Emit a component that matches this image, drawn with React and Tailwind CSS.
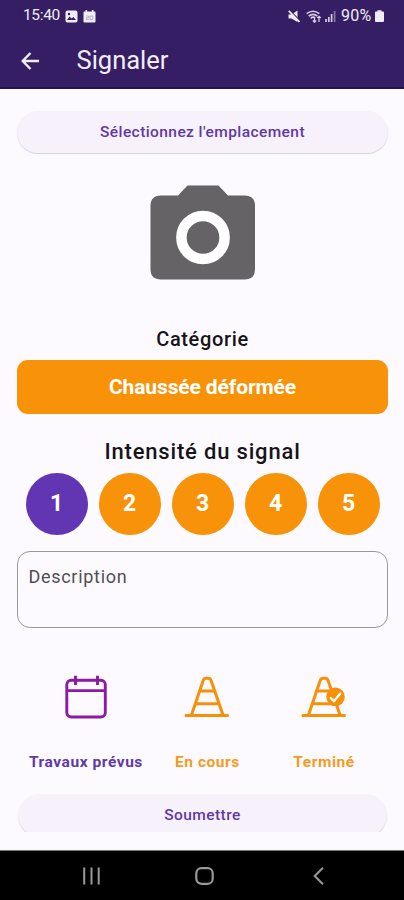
import React from "react";

const LEVELS = [1, 2, 3, 4, 5];

function StatusBar() {
  return (
    <div className="flex h-[32px] items-center pl-[23px] pr-[20px] text-[15.5px] text-[#f1edf8]">
      <span className="w-[38px] whitespace-nowrap tracking-[-0.35px]">15:40</span>
      <svg className="ml-[4px]" width="13" height="13" viewBox="0 0 13 13">
        <rect x="0.5" y="0.5" width="12" height="12" rx="2" fill="#f1edf8" />
        <path d="M2 10l2.5-3.5 2 2 2-1.500L11 10z" fill="#351e63" />
        <circle cx="4" cy="4" r="1.200" fill="#351e63" />
      </svg>
      <svg className="ml-[5px]" width="13" height="13" viewBox="0 0 13 13">
        <path d="M1.500 1.500h1V0h1.600v1.500h4.800V0h1.600v1.500h1q1 0 1 1V11.500q0 1-1 1h-10q-1 0-1-1v-9q0-1 1-1z" fill="#f1edf8" />
        <path d="M3.200 6h2.600v1.800H3.400V9.500h2.500M7.200 6h2.600v3.500H7.200z" fill="none" stroke="#aaa0c0" strokeWidth="0.8" />
      </svg>
      <svg className="ml-auto" width="12" height="13" viewBox="0 0 12 13">
        <path d="M0.500 4.500H3.500L9.500 0.500V12L3.500 8.500H0.500z" fill="#f1edf8" />
        <path d="M1.500 0L12 11" stroke="#351e63" strokeWidth="1.400" />
        <path d="M0.800 0.800L11.500 12" stroke="#f1edf8" strokeWidth="1.700" />
      </svg>
      <svg className="ml-[6px]" width="17" height="13" viewBox="0 0 17 13" fill="none" stroke="#d5cde2">
        <path d="M0.700 3.700Q7 -1.200 13.300 3.700M2.700 6.100Q7 2.500 11.300 6.100M4.700 8.300Q7 6.300 9 8" strokeWidth="1.700" />
        <path d="M8.500 12V7M6.800 10.500L8.500 12.200L10.200 10.500M13 12V6.500M11.300 8L13 6.300L14.700 8" strokeWidth="1.300" />
      </svg>
      <svg className="ml-[2px]" width="12" height="12" viewBox="0 0 12 12">
        <path d="M1 9v3M3.800 7v5M6.600 4v8" stroke="#d5cde2" strokeWidth="1.700" />
        <path d="M9.600 1v11" stroke="#8a7ba8" strokeWidth="1.700" />
      </svg>
      <span className="ml-[4px] w-[32px] whitespace-nowrap text-[16px] tracking-[0.300px]">90%</span>
      <svg className="ml-[2px]" width="9" height="12" viewBox="0 0 9 12">
        <path d="M2.500 0.300h4v1.200h1.500q1 0 1 1V11q0 1-1 1H1q-1 0-1-1V2.500q0-1 1-1h1.500z" fill="#f1edf8" />
      </svg>
    </div>
  );
}

function Header() {
  return (
    <header className="h-[89px] border-b-2 border-[#251052] bg-[#351e63]">
      <StatusBar />
      <div className="flex h-[57px] items-center pl-[21px]">
        <svg width="19" height="18" viewBox="0 0 19 18" fill="none" stroke="#f1edf8" strokeWidth="2.400">
          <path d="M18 9H2M9.500 1L1.700 9L9.500 17" />
        </svg>
        <h1 className="ml-[36.500px] text-[25.500px] leading-none tracking-[0px] text-[#f1edf8]">Signaler</h1>
      </div>
    </header>
  );
}

function Camera() {
  return (
    <svg className="mx-auto mt-[32px] block shrink-0" width="106" height="95" viewBox="0 0 106 95">
      <path d="M37.500 0.500H68.500L78 10.500H94.500Q105 10.500 105 21V84Q105 94.500 94.500 94.500H11Q0.500 94.500 0.500 84V21Q0.500 10.500 11 10.500H28Z" fill="#656366" />
      <circle cx="53" cy="52.500" r="21.600" fill="#656366" stroke="#fff" strokeWidth="10.500" />
    </svg>
  );
}

function CalendarIcon() {
  return (
    <svg width="46" height="46" viewBox="0 0 46 46" fill="none" stroke="#8a1ba2" strokeWidth="2.900">
      <rect x="3.800" y="6.300" width="38.500" height="36.700" rx="4.500" />
      <path d="M3.500 16.600H42.500M12.500 1.800V11M34.500 1.800V11" />
    </svg>
  );
}

function ConeIcon({ done = false }) {
  return (
    <svg width="46" height="46" viewBox="0 0 46 46" fill="none" stroke="#f79009" strokeWidth="3" strokeLinecap="round" strokeLinejoin="round">
      <path d="M2 41.500H43.500M7.500 41L19.200 6.500Q20 4.200 22.300 4.200H24Q26.300 4.200 27.100 6.500L39 41M15.500 17H31M11.500 29.700H35" />
      {done && (
        <>
          <circle cx="34.500" cy="22.800" r="9.300" fill="#f79009" stroke="none" />
          <path d="M29.700 24L33 27.300L39.200 19.500" stroke="#fff" strokeWidth="2.300" />
        </>
      )}
    </svg>
  );
}

function NavBar() {
  return (
    <nav className="flex h-[50px] shrink-0 items-center border-t border-[#777] bg-black pl-[83px] pr-[80px]">
      <svg width="17" height="18" viewBox="0 0 17 18" stroke="#999" strokeWidth="2">
        <path d="M1.200 0.500V17.500M8.500 0.500V17.500M15.700 0.500V17.500" />
      </svg>
      <svg className="ml-[95px]" width="19" height="18" viewBox="0 0 19 18" fill="none" stroke="#999" strokeWidth="2.200">
        <rect x="1.300" y="1.200" width="16.400" height="15.600" rx="5" />
      </svg>
      <svg className="ml-auto" width="11" height="18" viewBox="0 0 11 18" fill="none" stroke="#999" strokeWidth="2">
        <path d="M10 0.800L1.700 9L10 17.200" />
      </svg>
    </nav>
  );
}

export default function App() {
  return (
    <div className="flex h-[900px] w-[404px] flex-col overflow-hidden bg-[#fdfaff] font-['Roboto',sans-serif]">
      <Header />
      <main className="flex min-h-0 flex-1 flex-col pl-[17.400px] pr-[16.400px] pt-[22px]">
        <button className="flex h-[42px] shrink-0 items-center justify-center rounded-full bg-[#f7f1fc] pt-[1px] text-[15.500px] font-medium tracking-[0.42px] text-[#5f39a6] shadow-[0_1px_1px_rgba(0,0,0,0.16)]">
          Sélectionnez l'emplacement
        </button>
        <Camera />
        <h2 className="mt-[46px] text-center text-[20px] font-medium leading-[26px] tracking-[0.65px] text-[#161418]">Catégorie</h2>
        <button className="mt-[8px] flex h-[54px] shrink-0 items-center justify-center rounded-[11px] bg-[#f79209] pt-[1px] text-[21px] font-bold tracking-[-0.12px] text-white">
          Chaussée déformée
        </button>
        <h2 className="mt-[24px] text-center text-[22px] font-medium leading-[28px] tracking-[0.82px] text-[#161418]">Intensité du signal</h2>
        <div className="mt-[6.500px] flex justify-center gap-[11px]">
          {LEVELS.map((level) => (
            <button
              key={level}
              className={`flex size-[62px] items-center justify-center rounded-full pt-[2px] text-[23px] font-bold text-white ${level === 1 ? "bg-[#6236b3]" : "bg-[#f79209]"}`}
            >
              {level}
            </button>
          ))}
        </div>
        <div className="mt-[16.500px] h-[77px] shrink-0 rounded-[13px] border border-[#9a979c] pl-[10px] pt-[13px] text-[18px] leading-[24px] tracking-[0.72px] text-[#514e54]">
          Description
        </div>
        <div className="mt-[46px] flex h-[98px] shrink-0 whitespace-nowrap text-[15.500px] font-bold tracking-[0.56px]">
          <div className="flex w-[137px] flex-col items-center text-[#5f39a6]">
            <CalendarIcon />
            <span className="mt-[31.500px] leading-[20px]">Travaux prévus</span>
          </div>
          <div className="flex w-[106px] flex-col items-center text-[#f79a22]">
            <ConeIcon />
            <span className="mt-[31.500px] leading-[20px]">En cours</span>
          </div>
          <div className="flex flex-1 flex-col items-center text-[#f79a22]">
            <ConeIcon done />
            <span className="mt-[31.500px] leading-[20px]">Terminé</span>
          </div>
        </div>
        <div className="mt-[19px] h-[41px] shrink-0 overflow-hidden px-px pt-[3px]">
          <button className="flex h-[42px] w-full items-center justify-center rounded-full bg-[#f7f1fc] pt-[1px] text-[15.500px] font-medium tracking-[0.42px] text-[#5f39a6] shadow-[0_1px_1px_rgba(0,0,0,0.16)]">
            Soumettre
          </button>
        </div>
      </main>
      <NavBar />
    </div>
  );
}
